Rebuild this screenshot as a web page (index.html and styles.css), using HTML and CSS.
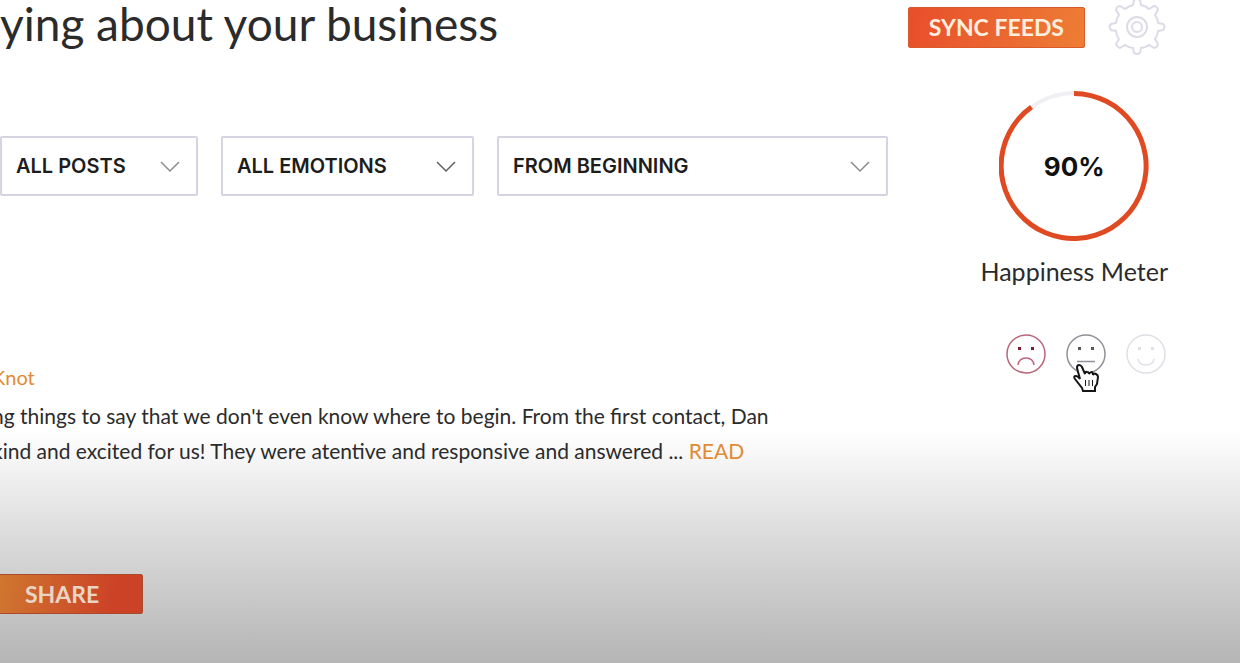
FILE: index.html
```html
<!DOCTYPE html>
<html lang="en">
<head>
  <meta charset="UTF-8">
  <meta name="viewport" content="width=device-width, initial-scale=1.0">
  <title>Happiness Meter</title>
  <link rel="stylesheet" href="styles.css">
</head>
<body>

  <header class="header">
    <h1>ying about your business</h1>
    <div class="actions">
      <button class="btn" type="button">SYNC FEEDS</button>
      <button class="icon-btn" type="button" aria-label="Settings">
        <svg class="gear" viewBox="0 0 56 56">
          <path d="M24 6 L25 1 Q28 -1 31 1 L32 6 Q37 7 40 10 L45 7 Q48 7 49 11 L46 16 Q49 20 49 24 L54 25 Q57 28 54 31 L49 32 Q49 36 46 40 L49 45 Q49 48 45 49 L40 46 Q36 49 32 49 L31 54 Q28 56 25 54 L24 49 Q20 49 16 46 L11 49 Q8 48 7 45 L10 40 Q7 36 7 32 L2 31 Q-1 28 2 25 L7 24 Q7 20 10 16 L7 11 Q8 7 11 7 L16 10 Q20 7 24 6 Z"/>
          <circle cx="28" cy="28" r="10"/>
          <circle cx="28" cy="28" r="5"/>
        </svg>
      </button>
    </div>
  </header>

  <div class="content">
    <main class="main">
      <form class="filters">
        <div class="filter">
          <select aria-label="Posts"><option>ALL POSTS</option></select>
          <svg class="chevron" viewBox="0 0 20 12"><path d="M1 1 L10 10 L19 1"/></svg>
        </div>
        <div class="filter">
          <select aria-label="Emotions"><option>ALL EMOTIONS</option></select>
          <svg class="chevron dark" viewBox="0 0 20 12"><path d="M1 1 L10 10 L19 1"/></svg>
        </div>
        <div class="filter">
          <select aria-label="Period"><option>FROM BEGINNING</option></select>
          <svg class="chevron" viewBox="0 0 20 12"><path d="M1 1 L10 10 L19 1"/></svg>
        </div>
      </form>

      <article class="post">
        <a class="source" href="#">Knot</a>
        <p>ng things to say that we don't even know where to begin. From the first contact, Dan<br>
        kind and excited for us! They were atentive and responsive and answered ... <a href="#">READ</a></p>
        <button class="btn share" type="button">SHARE</button>
      </article>
    </main>

    <aside class="side">
      <div class="meter">
        <svg viewBox="0 0 150 150">
          <path class="track" d="M33 16 A72 72 0 0 1 75 2"/>
          <path class="value" d="M75 0 A75 75 0 1 1 31 14 L34 18 A70 70 0 1 0 75 5 Z"/>
        </svg>
        <span class="percent">90%</span>
      </div>
      <div class="label">Happiness Meter</div>

      <div class="faces">
        <button class="icon-btn" type="button" aria-label="Sad">
          <svg class="face sad" viewBox="0 0 40 40">
            <circle cx="20" cy="20" r="19"/>
            <rect x="12" y="13" width="3" height="3"/>
            <rect x="25" y="13" width="3" height="3"/>
            <path d="M12 31 Q13 24 20 24 Q27 24 28 31"/>
          </svg>
        </button>
        <button class="icon-btn" type="button" aria-label="Neutral">
          <svg class="face neutral" viewBox="0 0 40 40">
            <circle cx="20" cy="20" r="19"/>
            <rect x="12" y="13" width="3" height="3"/>
            <rect x="25" y="13" width="3" height="3"/>
            <path d="M11 27.5 H29"/>
          </svg>
          <svg class="pointer" viewBox="0 0 26 28">
            <path d="M7 15 L4 4 Q4 1 6 1 Q8 1 9 3 L12 10 Q12 7 14 8 Q16 8 16 10 Q17 8 19 8 Q20 9 20 11 Q21 9 23 10 Q25 11 25 13 L24 20 L22 23 L22 27 H10 L9 24 L2 15 Q0 12 3 12 Q5 12 7 15 Z"/>
            <path d="M12.500 16 V22 M16 16 V22 M19.500 16 V22"/>
          </svg>
        </button>
        <button class="icon-btn" type="button" aria-label="Happy">
          <svg class="face happy" viewBox="0 0 40 40">
            <circle cx="20" cy="20" r="19"/>
            <rect x="12" y="13" width="3" height="3"/>
            <rect x="25" y="13" width="3" height="3"/>
            <path d="M12 25 Q13 31 20 31 Q27 31 28 25"/>
          </svg>
        </button>
      </div>
    </aside>
  </div>

</body>
</html>
```
FILE: styles.css
```css
* { box-sizing: border-box; }
body {
  margin: 0;
  min-height: 100vh;
  background: linear-gradient(#ffffff 0, #ffffff 65%, #dbdbdb 81%, #b5b5b5 100%);
  font-family: Lato, sans-serif;
  color: #2b2b2b;
  overflow-x: hidden;
}
a { color: #e28a32; text-decoration: none; }
button { font-family: inherit; cursor: pointer; }
.header {
  display: flex;
  justify-content: space-between;
  height: 54px;
  padding-right: 75px;
}
h1 {
  margin: 0;
  font-size: 46px;
  line-height: 48px;
  font-weight: 400;
  white-space: nowrap;
}
.actions {
  display: flex;
  align-items: center;
  gap: 24px;
}
.btn {
  height: 41px;
  padding: 0 20px;
  border: 1px solid #dc592c;
  border-radius: 2px;
  background: linear-gradient(100deg, #e84e2c, #ee7d34);
  color: #ffeedd;
  font-size: 23px;
  font-weight: 700;
}
.icon-btn {
  position: relative;
  display: block;
  padding: 0;
  border: 0;
  background: none;
}
.icon-btn svg { display: block; overflow: visible; }
.gear {
  width: 56px;
  height: 56px;
  fill: none;
  stroke: #dcdce8;
  stroke-width: 2;
}
.content {
  display: flex;
  justify-content: space-between;
  padding-right: 72px;
}
.main {
  flex: 0 1 888px;
  padding-top: 82px;
}
.filters {
  display: grid;
  grid-template-columns: 198fr 253fr 391fr;
  gap: 23px;
}
.filter { position: relative; }
.filter select {
  width: 100%;
  height: 60px;
  padding: 0 14px;
  border: 2px solid #d4d4e2;
  border-radius: 2px;
  background: #ffffff;
  appearance: none;
  font-family: Inter, sans-serif;
  font-size: 20px;
  font-weight: 600;
  color: #1d1d1d;
}
.chevron {
  position: absolute;
  right: 18px;
  top: 25px;
  width: 20px;
  height: 12px;
  fill: none;
  stroke: #8c8c8c;
  stroke-width: 1.5;
  pointer-events: none;
}
.chevron.dark { stroke: #606060; }
.post {
  margin: 163px 0 0 -8px;
  font-size: 21px;
  line-height: 35px;
}
.source { font-size: 20px; }
.post p {
  margin: 3px 0 106px;
  white-space: nowrap;
}
.share {
  display: block;
  height: 40px;
  padding: 0 43px 0 32px;
  border-color: #a84a2b;
  background: linear-gradient(100deg, #cf7a30, #cc4227 80%);
  color: #e8d5c4;
}
.side {
  display: flex;
  flex-direction: column;
  align-items: center;
  padding-top: 37px;
}
.meter {
  display: grid;
  place-items: center;
  width: 150px;
  height: 150px;
}
.meter svg, .percent { grid-area: 1 / 1; }
.meter svg { width: 100%; }
.track { fill: none; stroke: #f0f0f4; stroke-width: 4; }
.value { fill: #e04a22; }
.percent {
  font-family: Inter, sans-serif;
  font-size: 26px;
  font-weight: 700;
  color: #111111;
}
.label {
  margin-top: 14px;
  font-size: 25px;
  line-height: 32px;
}
.faces {
  display: flex;
  gap: 20px;
  margin-top: 47px;
  padding-left: 23px;
}
.face {
  width: 40px;
  height: 40px;
  fill: none;
  stroke: currentColor;
  stroke-width: 1.5;
}
.face rect { fill: currentColor; stroke: none; }
.face.sad { color: #b8657a; }
.face.sad rect { fill: #7c1c34; }
.face.neutral { color: #909098; }
.face.neutral rect { fill: #55555c; }
.face.happy { color: #dfdfe6; }
.pointer {
  position: absolute;
  left: 7px;
  top: 30px;
  width: 26px;
  height: 28px;
  fill: #ffffff;
  stroke: #161616;
  stroke-width: 2;
}
.pointer path + path { stroke-width: 1; }
```
